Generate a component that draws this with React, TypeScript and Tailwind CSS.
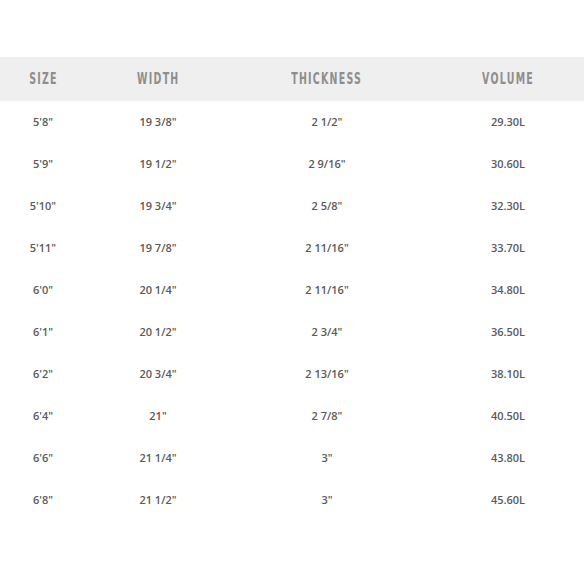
// Tabella misure tavole: intestazione grigia + righe centrate.

const rows: [string, string, string, string][] = [
  ["5'8\"", "19 3/8\"", "2 1/2\"", "29.30L"],
  ["5'9\"", "19 1/2\"", "2 9/16\"", "30.60L"],
  ["5'10\"", "19 3/4\"", "2 5/8\"", "32.30L"],
  ["5'11\"", "19 7/8\"", "2 11/16\"", "33.70L"],
  ["6'0\"", "20 1/4\"", "2 11/16\"", "34.80L"],
  ["6'1\"", "20 1/2\"", "2 3/4\"", "36.50L"],
  ["6'2\"", "20 3/4\"", "2 13/16\"", "38.10L"],
  ["6'4\"", "21\"", "2 7/8\"", "40.50L"],
  ["6'6\"", "21 1/4\"", "3\"", "43.80L"],
  ["6'8\"", "21 1/2\"", "3\"", "45.60L"],
];

const cols = "grid grid-cols-[86px_144px_194px_1fr]";
const heads = ["SIZE", "WIDTH", "THICKNESS", "VOLUME"];

export default function App() {
  return (
    <div className="min-h-[584px] w-[584px] bg-white pt-[57px]">
      <div
        className={`${cols} h-[44px] items-center bg-[#efefef] text-[15px] font-bold tracking-[0.12em] text-[#8e8e8e]`}
        style={{ fontFamily: '"DejaVu Sans Condensed", "DejaVu Sans", sans-serif' }}
      >
        {heads.map((h, i) => (
          <div key={h} className={i === 3 ? "pl-2 text-center" : "text-center"}>
            <span className="inline-block scale-x-[0.7]">{h}</span>
          </div>
        ))}
      </div>
      {rows.map((r) => (
        <div
          key={r[0]}
          className={`${cols} h-[42px] items-center text-[11px] font-semibold text-[#5a5a5a]`}
          style={{ fontFamily: '"Open Sans", sans-serif' }}
        >
          <div className="text-center">{r[0]}</div>
          <div className="text-center">{r[1]}</div>
          <div className="text-center">{r[2]}</div>
          <div className="pl-2 text-center">{r[3]}</div>
        </div>
      ))}
    </div>
  );
}
